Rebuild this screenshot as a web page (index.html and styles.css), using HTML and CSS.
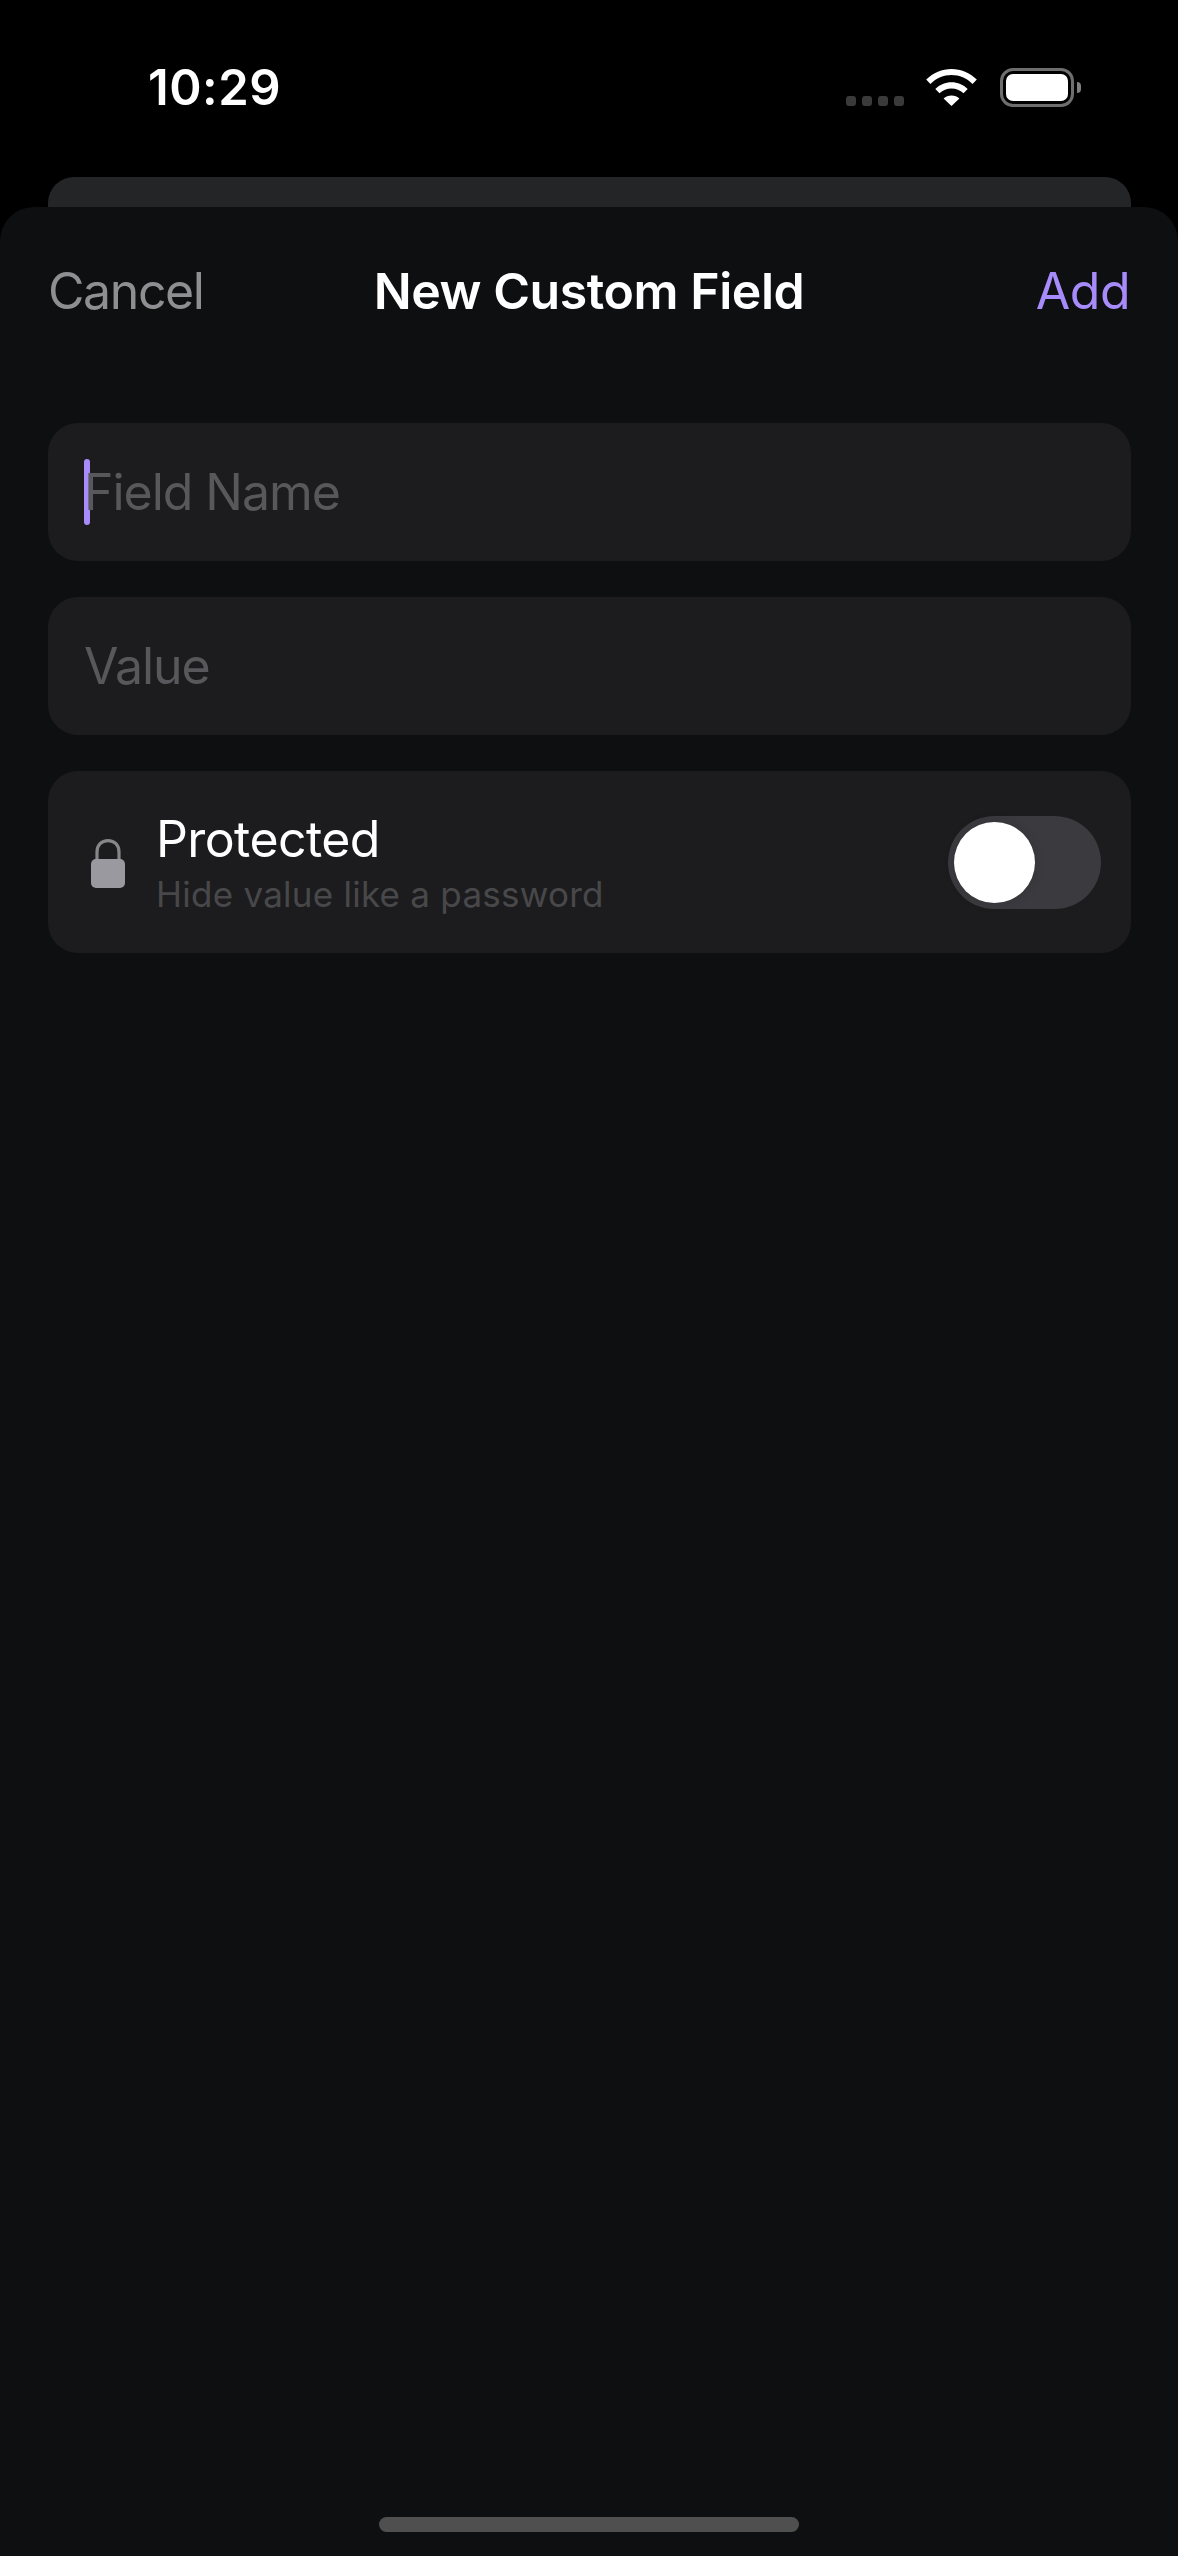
FILE: index.html
```html
<!DOCTYPE html>
<html lang="en">
<head>
  <meta charset="UTF-8" />
  <meta name="viewport" content="width=device-width, initial-scale=1.0"/>
  <title>New Custom Field</title>
  <link rel="stylesheet" href="styles.css">
</head>
<body>
  <div class="phone">
    <!-- Status bar -->
    <div class="status-bar">
      <span class="time">10:29</span>
      <div class="status-icons">
        <div class="signal">
          <span></span><span></span><span></span><span></span>
        </div>
        <svg class="wifi" width="51" height="37" viewBox="0 0 51 37">
          <path d="M25.5 0C35 0 43.8 3.7 50.8 10.6L46.6 15C40.7 9.3 33.4 6.1 25.5 6.1S10.3 9.3 4.4 15L0.2 10.6C7.2 3.7 16 0 25.5 0Z" fill="#fff"/>
          <path d="M25.5 13.2C31.6 13.2 37.2 15.6 41.7 19.9L37.5 24.3C34.2 21.2 30 19.4 25.5 19.4S16.8 21.2 13.5 24.3L9.3 19.9C13.8 15.6 19.4 13.2 25.5 13.2Z" fill="#fff"/>
          <path d="M25.5 26.4C28.6 26.4 31.4 27.5 33.4 29.4L25.5 37L17.6 29.4C19.6 27.5 22.4 26.4 25.5 26.4Z" fill="#fff"/>
        </svg>
        <div class="battery">
          <div class="battery-body"><div class="battery-level"></div></div>
          <div class="battery-nub"></div>
        </div>
      </div>
    </div>

    <!-- Card of the screen behind the sheet -->
    <div class="back-card"></div>

    <!-- Sheet -->
    <div class="sheet">
      <div class="nav">
        <span class="nav-cancel">Cancel</span>
        <span class="nav-title">New Custom Field</span>
        <span class="nav-add">Add</span>
      </div>

      <div class="form">
        <div class="field">
          <span class="caret"></span>
          <span class="placeholder">Field Name</span>
        </div>
        <div class="field">
          <span class="placeholder">Value</span>
        </div>
        <div class="toggle-row">
          <svg class="lock" width="34" height="49" viewBox="0 0 34 49">
            <path d="M6 24V13C6 6 10.5 1.6 17 1.6S28 6 28 13V24" fill="none" stroke="#85858a" stroke-width="3.2"/>
            <rect x="0" y="20" width="34" height="29" rx="5" fill="#9a99a0"/>
          </svg>
          <div class="toggle-text">
            <div class="toggle-label">Protected</div>
            <div class="toggle-hint">Hide value like a password</div>
          </div>
          <div class="switch"><div class="switch-knob"></div></div>
        </div>
      </div>

      <div class="home-bar"></div>
    </div>
  </div>
</body>
</html>
```

FILE: styles.css
```css
html, body {
  margin: 0;
  height: 100%;
}

body {
  background-color: #000;
  color: #fff;
  font-family: Inter, "Noto Sans", sans-serif;
}

.phone {
  display: flex;
  flex-direction: column;
  height: 2556px;
  overflow: hidden;
}

/* Status bar */
.status-bar {
  display: flex;
  justify-content: space-between;
  height: 177px;
  box-sizing: border-box;
  padding: 58px 97px 0 148px;
}

.time {
  font-size: 49px;
  font-weight: 600;
  line-height: 60px;
  letter-spacing: 0.5px;
}

.status-icons {
  display: flex;
  align-items: flex-start;
  padding-top: 10px;
}

.signal {
  display: flex;
  gap: 6px;
  margin-top: 28px;
  margin-right: 22px;
}

.signal span {
  width: 10px;
  height: 10px;
  border-radius: 3px;
  background-color: #3a3a3a;
}

.wifi {
  margin-top: 1px;
  margin-right: 23px;
}

.battery {
  display: flex;
  align-items: center;
}

.battery-body {
  width: 74px;
  height: 39px;
  box-sizing: border-box;
  border: 3px solid #6e6e6e;
  border-radius: 13px;
  padding: 3px;
}

.battery-level {
  height: 100%;
  background-color: #fff;
  border-radius: 7px;
}

.battery-nub {
  width: 4px;
  height: 11px;
  margin-left: 3px;
  background-color: #7f7f7f;
  border-radius: 0 4px 4px 0;
}

/* Card behind the sheet */
.back-card {
  height: 30px;
  margin: 0 47px 0 48px;
  background-color: #242526;
  border-radius: 26px 26px 0 0;
}

/* Sheet */
.sheet {
  display: flex;
  flex-direction: column;
  flex: 1;
  background-color: #0e0f11;
  border-radius: 34px 34px 0 0;
}

.nav {
  display: grid;
  grid-template-columns: 1fr auto 1fr;
  align-items: center;
  height: 106px;
  padding: 31px 48px 0 48px;
  font-size: 50px;
}

.nav-cancel {
  color: #8e8e93;
  letter-spacing: -1.4px;
}

.nav-title {
  font-weight: 600;
  letter-spacing: -0.45px;
}

.nav-add {
  color: #a78bfa;
  letter-spacing: -0.5px;
  text-align: right;
}

.form {
  display: flex;
  flex-direction: column;
  gap: 36px;
  margin: 79px 47px 0 48px;
}

.field {
  display: flex;
  align-items: center;
  height: 138px;
  box-sizing: border-box;
  padding-left: 36px;
  background-color: #1c1c1e;
  border-radius: 30px;
}

.caret {
  width: 6px;
  height: 66px;
  margin-right: -6px;
  background-color: #a78bfa;
  border-radius: 3px;
}

.placeholder {
  color: #58585c;
  font-size: 50px;
  letter-spacing: -1.05px;
}

.toggle-row {
  display: flex;
  align-items: center;
  height: 182px;
  box-sizing: border-box;
  padding: 0 30px 0 43px;
  background-color: #1c1c1e;
  border-radius: 30px;
}

.lock {
  flex-shrink: 0;
  margin-top: 2px;
  margin-right: 31px;
}

.toggle-text {
  flex: 1;
}

.toggle-label {
  font-size: 50px;
  line-height: 60px;
  letter-spacing: -0.6px;
}

.toggle-hint {
  margin-top: 4px;
  color: #48484a;
  font-size: 35px;
  line-height: 42px;
  letter-spacing: 0.25px;
}

.switch {
  width: 153px;
  height: 93px;
  box-sizing: border-box;
  padding: 6px;
  background-color: #3a3a3f;
  border-radius: 47px;
}

.switch-knob {
  width: 81px;
  height: 81px;
  background-color: #fff;
  border-radius: 50%;
  box-shadow: 0 0 12px rgba(0, 0, 0, 0.12);
}

.home-bar {
  width: 420px;
  height: 15px;
  margin: auto auto 24px;
  background-color: #4f4f4f;
  border-radius: 8px;
}
```
